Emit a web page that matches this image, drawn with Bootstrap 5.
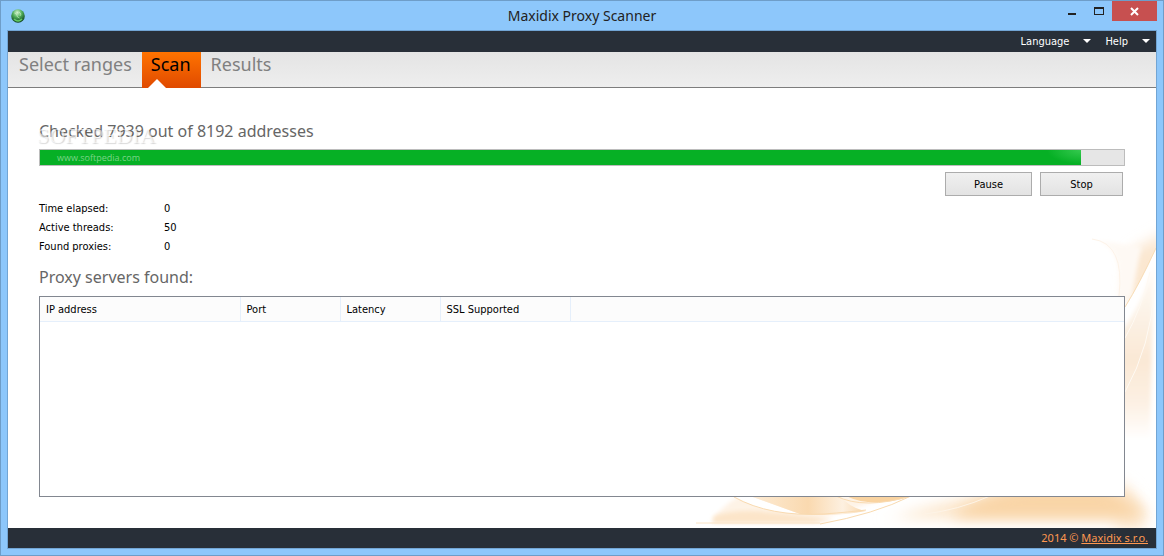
<!DOCTYPE html>
<html lang="en">
<head>
<meta charset="utf-8">
<meta name="viewport" content="width=device-width, initial-scale=1">
<title>Maxidix Proxy Scanner</title>
<link href="https://cdn.jsdelivr.net/npm/bootstrap@5.3.0/dist/css/bootstrap.min.css" rel="stylesheet">
<style>
  :root { --frame: #8dc7fb; --edge: #6e9dc8; --ink: #282f38; }
  body { font-family: "DejaVu Sans Condensed", "Noto Sans", sans-serif; font-size: 11px; line-height: 19px; color: #000; background: var(--frame); }
  .app-window { border: 1px solid var(--edge); padding: 0 6px 6px; background: var(--frame); }
  .title-bar { height: 29px; padding: 0 18px 0 4px; }
  .title-bar h1 { font-family: "Noto Sans", sans-serif; font-size: 14px; line-height: 29px; font-weight: 400; color: #222; }
  .title-icon { width: 14px; height: 14px; }
  .win-btn { height: 20px; width: 27px; border: 0; padding: 0; background: transparent; line-height: 0; }
  .win-close { width: 45px; background: #c75050; }
  .client { border: 1px solid #72a5d4; background: #fff; }
  .menu-strip { height: 21px; background: var(--ink); gap: 14px; padding-right: 6px; }
  .menu-strip button { border: 0; padding: 0; background: transparent; color: #fff; line-height: 21px; }
  .menu-strip button svg { margin-left: 14px; }
  .tab-strip { height: 36px; background: linear-gradient(#e4e4e4, #eee); border-bottom: 1px solid #7d7d7d; padding-left: 1px; font-family: "Noto Sans", sans-serif; font-size: 18px; }
  .tab-strip a { color: #808080; line-height: 24px; padding: 0 10px; height: 35px; text-decoration: none; }
  .tab-strip a.active { color: #000; background: linear-gradient(#ff7300, #e04a00); height: 36px; padding-left: 9px; }
  .tab-notch { left: 6px; bottom: 0; }
  .scan-page { padding: 32px 31px 31px; }
  .swirl { right: 0; bottom: 0; width: 460px; height: 320px; }
  .section-title { font-family: "Noto Sans", sans-serif; font-size: 16px; line-height: 22px; color: #666; font-weight: 400; margin: 0 0 7px; }
  .found-title { margin: 10px 0 8px; }
  .scan-progress { height: 17px; border: 1px solid #bcbcbc; border-radius: 0; background: #e6e6e6; }
  .scan-progress .progress-bar { background: radial-gradient(ellipse 34px 14px at 100% 0, #35c94f, #06b025); }
  .scan-actions { padding: 6px 2px 3px 0; }
  .sys-btn { height: 24px; border: 1px solid #acacac; background: linear-gradient(#f0f0f0, #e3e3e3); color: #000; padding: 0; }
  .btn-pause { width: 87px; }
  .btn-stop { width: 83px; }
  .stat-name { width: 125px; }
  .result-box { border: 1px solid #828790; background: #fff; }
  .result-box table { table-layout: fixed; line-height: 22px; }
  .result-box th { font-weight: 400; padding: 2px 6px 0; background: #fcfcfc; border-right: 1px solid #e5effb; border-bottom: 1px solid #e5effb; }
  .result-box th:last-child { border-right: 0; }
  .col-ip { width: 200px; } .col-val { width: 100px; } .col-ssl { width: 130px; }
  .wm-name { left: 29px; top: 37px; font: 22px/22px "Liberation Serif", serif; color: rgba(255,255,255,.6); text-shadow: 1px 1px 1px rgba(0,0,0,.16); }
  .wm-site { left: 17px; top: 0; font: 9px/15px "Open Sans", sans-serif; color: #7ad488; }
  .status-strip { height: 20px; background: var(--ink); color: #ff9850; font-family: "Noto Sans", sans-serif; padding-right: 8px; line-height: 19px; }
  .status-strip a { color: #ff9850; }
</style>
</head>
<body>
<div class="app-window d-flex flex-column min-vh-100">
  <header class="title-bar d-flex align-items-start position-relative">
    <svg class="title-icon mt-2" viewBox="0 0 14 14" aria-hidden="true">
      <defs><radialGradient id="globe" cx=".45" cy=".25" r=".75"><stop offset="0" stop-color="#d5f5cf"/><stop offset=".45" stop-color="#4fae58"/><stop offset="1" stop-color="#0c3e20"/></radialGradient></defs>
      <circle cx="7" cy="7" r="6.8" fill="url(#globe)"/>
      <path d="M3.500 4l2 1 1 3 2 1M8 3l2 2-1 2" stroke="#d2f0cd" stroke-width=".8" opacity=".7" fill="none"/>
      <path d="M3 10q4 4 8 0" stroke="#63cc65" stroke-width="1.500" fill="none"/>
    </svg>
    <h1 class="flex-fill text-center m-0">Maxidix Proxy Scanner</h1>
    <div class="d-flex position-absolute top-0 end-0">
      <button class="win-btn" aria-label="Minimize"><svg width="27" height="20"><path d="M10 12h8v2h-8z" fill="#222"/></svg></button>
      <button class="win-btn" aria-label="Maximize"><svg width="27" height="20"><path fill-rule="evenodd" d="M9 6h10v8H9zM10 8h8v5h-8z" fill="#222"/></svg></button>
      <button class="win-btn win-close" aria-label="Close"><svg width="45" height="20"><path d="M19 7l7 7M26 7l-7 7" stroke="#fff" stroke-width="2"/></svg></button>
    </div>
  </header>
  <div class="client d-flex flex-column flex-fill">
    <nav class="menu-strip d-flex justify-content-end" aria-label="Menu">
      <button>Language<svg width="8" height="9" aria-hidden="true"><path d="M0 1h8L4 5z" fill="#fff"/></svg></button>
      <button>Help<svg width="8" height="9" aria-hidden="true"><path d="M0 1h8L4 5z" fill="#fff"/></svg></button>
    </nav>
    <nav class="tab-strip d-flex" aria-label="Steps">
      <a href="#ranges">Select ranges</a>
      <a href="#scan" class="active position-relative" aria-current="page">Scan
        <svg class="tab-notch position-absolute" width="18" height="9" aria-hidden="true"><path d="M0 9L9 0l9 9z" fill="#fff"/></svg></a>
      <a href="#results">Results</a>
    </nav>
    <main class="scan-page position-relative d-flex flex-column flex-fill">
      <svg class="swirl position-absolute" viewBox="696 208 460 320" aria-hidden="true">
        <defs>
          <filter id="soft" x="-60%" y="-60%" width="220%" height="220%"><feGaussianBlur stdDeviation="7"/></filter>
          <filter id="mild" x="-20%" y="-20%" width="140%" height="140%"><feGaussianBlur stdDeviation="2"/></filter>
          <linearGradient id="wing" x1="0" x2="0" y1="0" y2="1"><stop offset="0" stop-color="#fffcf8"/><stop offset=".3" stop-color="#fcf2e6"/><stop offset=".55" stop-color="#fae8d5"/><stop offset=".8" stop-color="#fdf1e4"/><stop offset="1" stop-color="#fff"/></linearGradient>
          <linearGradient id="petal" x1="0" x2="1"><stop offset="0" stop-color="#fdecd6"/><stop offset=".5" stop-color="#fad9af"/><stop offset=".8" stop-color="#fdf0e0"/><stop offset="1" stop-color="#f9d7ab"/></linearGradient>
        </defs>
        <path d="M1130 252L1165 232V290L1125 305z" fill="#fbe7d0" filter="url(#soft)"/>
        <path d="M1096 240q28 8 23 57h12l10-50z" fill="#fef9f4" filter="url(#mild)"/>
        <path d="M1092 239q33 4 27 57" fill="none" stroke="#fdf3e8"/>
        <path d="M1156 248Q1140 283 1125 307V440H1156z" fill="#fff"/>
        <path d="M1154 262Q1142 308 1120 332V440h30z" fill="url(#wing)" filter="url(#mild)"/>
        <path d="M1156 248Q1140 283 1125 307" fill="none" stroke="#f8dcb5"/>
        <path d="M1150 272q-8 36-25 66M1154 290q-3 55-29 102" fill="none" stroke="#fffaf3"/>
        <path d="M1115 480q24 4 30 50h-30z" fill="#fdebd6" filter="url(#soft)"/>
        <path d="M885 520Q960 496 1020 490H1110Q1146 500 1148 518H885z" fill="#fce6cb" filter="url(#soft)"/>
        <path d="M950 518Q980 494 1030 486H1100Q1130 498 1142 518z" fill="#f9d5a7" filter="url(#soft)"/>
        <path d="M925 514q33-4 65-18" fill="none" stroke="#fef4e7"/>
        <path d="M712 520q16-20 30-24h150q-46 16-80 24z" fill="#fef3e6" filter="url(#mild)"/>
        <path d="M714 516q25-8 60-3l60 6-20 4H712z" fill="#fce5c9" filter="url(#mild)"/>
        <path d="M734 496q24 16 66 18l-50-18z" fill="#fff"/>
        <path d="M750 496h90q10 12 26 15-30 6-66 3z" fill="url(#petal)"/>
        <path d="M846 496h65q-38 13-65 0z" fill="#f9d3a0"/>
        <path d="M734 497q36 20 90 17 26-2 42-4M836 496q28 14 75 0-36 18-91 28" fill="none" stroke="#f9dab0"/>
        <path d="M696 523h124" fill="none" stroke="#fbe4c6"/>
      </svg>
      <h2 class="section-title position-relative">Checked 7939 out of 8192 addresses</h2>
      <span class="wm-name position-absolute" aria-hidden="true">SOFTPEDIA</span>
      <div class="progress scan-progress position-relative flex-shrink-0" role="progressbar" aria-label="Addresses checked" aria-valuenow="96" aria-valuemin="0" aria-valuemax="100">
        <div class="progress-bar" style="width:96%"></div>
        <span class="wm-site position-absolute">www.softpedia.com</span>
      </div>
      <div class="scan-actions position-relative d-flex justify-content-end gap-2">
        <button class="sys-btn btn-pause">Pause</button>
        <button class="sys-btn btn-stop">Stop</button>
      </div>
      <dl class="position-relative mb-0">
        <div class="d-flex"><dt class="stat-name fw-normal">Time elapsed:</dt><dd class="m-0">0</dd></div>
        <div class="d-flex"><dt class="stat-name fw-normal">Active threads:</dt><dd class="m-0">50</dd></div>
        <div class="d-flex"><dt class="stat-name fw-normal">Found proxies:</dt><dd class="m-0">0</dd></div>
      </dl>
      <h2 class="section-title found-title position-relative">Proxy servers found:</h2>
      <div class="result-box position-relative flex-fill">
        <table class="w-100">
          <colgroup><col class="col-ip"><col class="col-val"><col class="col-val"><col class="col-ssl"><col></colgroup>
          <thead><tr><th>IP address</th><th>Port</th><th>Latency</th><th>SSL Supported</th><th></th></tr></thead>
        </table>
      </div>
    </main>
    <footer class="status-strip text-end">2014 © <a href="#maxidix">Maxidix s.r.o.</a></footer>
  </div>
</div>
<script src="https://cdn.jsdelivr.net/npm/bootstrap@5.3.0/dist/js/bootstrap.bundle.min.js"></script>
</body>
</html>
